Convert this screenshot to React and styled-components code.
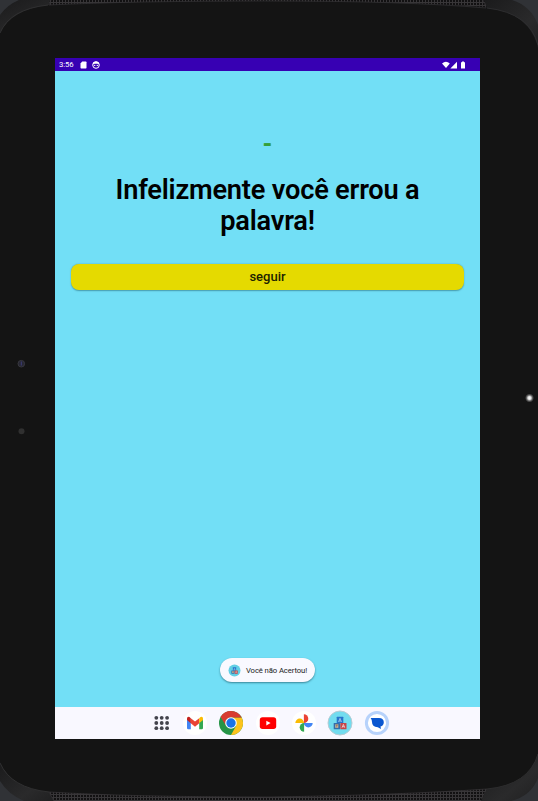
import React from "react";
import styled, { createGlobalStyle } from "styled-components";

const GlobalStyle = createGlobalStyle`
  * { box-sizing: border-box; }
  body { margin: 0; background: #141414; font-family: Roboto, sans-serif; }
`;

const Tablet = styled.main`
  position: relative;
  width: 538px;
  height: 801px;
  padding: 58px 58px 62px 55px;
  background: #141414;
  overflow: hidden;
`;

const Shell = styled.svg`
  position: absolute;
  inset: 0;
`;

const Screen = styled.section`
  position: relative;
  display: flex;
  flex-direction: column;
  width: 425px;
  height: 681px;
  background: #72dff6;
`;

const StatusBar = styled.header`
  display: flex;
  align-items: center;
  justify-content: space-between;
  height: 13px;
  padding: 0 13px 0 4px;
  background: #3700b3;
  color: #fff;
`;

const StatusGroup = styled.div`
  display: flex;
  align-items: center;
  gap: ${(p) => p.$gap}px;
`;

const Clock = styled.time`
  width: 15px;
  font-size: 7.7px;
  letter-spacing: -0.1px;
  line-height: 13px;
`;

const Content = styled.div`
  flex: 1;
  display: flex;
  flex-direction: column;
  align-items: center;
  padding: 60px 16px 25px;
`;

const Word = styled.p`
  margin: 0;
  height: 44px;
  color: #35a03a;
  font-size: 25px;
  font-weight: 700;
  line-height: 27px;
`;

const Message = styled.h1`
  margin: 0;
  width: 330px;
  color: #000;
  text-align: center;
  font-size: 27.2px;
  font-weight: 600;
  letter-spacing: -0.2px;
  line-height: 31px;
`;

const NextButton = styled.button`
  width: 393px;
  height: 26px;
  margin: 27px 0 0;
  padding: 0;
  border: 0;
  border-radius: 8px;
  background: #e5da00;
  color: #211f00;
  box-shadow: 0 0.5px 1.5px rgba(0, 50, 60, 0.4);
  font: 500 13px/24px Roboto, sans-serif;
`;

const Toast = styled.div`
  display: flex;
  align-items: center;
  gap: 5px;
  width: 95px;
  height: 24px;
  margin-top: auto;
  padding-left: 8px;
  border-radius: 12px;
  background: #f9f9ff;
  color: #1c1c22;
  box-shadow: 0 1px 2px rgba(0, 45, 60, 0.5);
  font-size: 7.7px;
  letter-spacing: -0.1px;
  white-space: nowrap;
`;

const Taskbar = styled.nav`
  display: grid;
  grid-template-columns: 32px repeat(6, 36.4px);
  align-items: center;
  justify-items: center;
  height: 32px;
  padding-left: 89.7px;
  background: #f9f8ff;
`;

const AppIcon = styled.svg`
  display: block;
  width: 26px;
  height: 26px;
`;

const DeviceShell = () => (
  <Shell width="538" height="801" viewBox="0 0 538 801" aria-hidden="true">
    <defs>
      <pattern id="mesh" width="3" height="3" patternUnits="userSpaceOnUse">
        <rect width="3" height="3" fill="#383638" />
        <rect x="0" y="0" width="2" height="2" fill="#121112" />
      </pattern>
      <linearGradient id="rim" x1="0" y1="0" x2="1" y2="1">
        <stop offset="0" stopColor="#1b1b1c" />
        <stop offset=".65" stopColor="#2a2a2b" />
        <stop offset="1" stopColor="#202021" />
      </linearGradient>
      <radialGradient id="led">
        <stop offset="0" stopColor="#fff" />
        <stop offset=".35" stopColor="#ddd" />
        <stop offset=".65" stopColor="#656565" />
        <stop offset="1" stopColor="#141414" />
      </radialGradient>
    </defs>
    <path d="M0 0H70L49 5Q12 9 0 33Z" fill="url(#rim)" />
    <path d="M0 0H19Q7 5 0 15Z" fill="#303236" />
    <path d="M0 33Q10 9 48 5" fill="none" stroke="#303031" />
    <path d="M50 0H486L487 7Q400 1 270 1Q130 1 49 5Z" fill="url(#mesh)" />
    <path d="M51 0L49 5Q130 1 270 1Q405 1 486 8L483 0" fill="none" stroke="#353436" strokeWidth=".7" />
    <path d="M484 0H538V48Q530 13 487 8Z" fill="url(#rim)" />
    <path d="M512 0H538V25Q531 6 512 0Z" fill="#303236" />
    <path d="M487 8Q530 13 538 45" fill="none" stroke="#2d2d2f" />
    <path d="M0 762Q10 788 49 792L54 801H0Z" fill="url(#rim)" />
    <path d="M0 781Q8 794 24 801H0Z" fill="#303236" />
    <path d="M0 763Q11 788 49 792" fill="none" stroke="#303031" />
    <path d="M49 792Q130 797 270 797Q400 795 487 789L481 801H54Z" fill="url(#mesh)" />
    <path d="M54 801L49 792Q130 797 270 797Q400 795 487 789L481 799" fill="none" stroke="#39373a" strokeWidth=".7" />
    <path d="M487 789Q529 785 538 754V801H481Z" fill="url(#rim)" />
    <path d="M538 778Q531 796 511 801H538Z" fill="#303236" />
    <path d="M487 789Q529 785 538 754" fill="none" stroke="#2c2c2d" />
    <circle cx="21.3" cy="363.7" r="3.3" fill="#272733" stroke="#38383f" />
    <path d="M21.3 361.5v4" stroke="#3c3c78" />
    <circle cx="21.5" cy="431.3" r="3" fill="#303030" />
    <circle cx="529.5" cy="398" r="4.5" fill="url(#led)" />
  </Shell>
);

const SdCardIcon = () => (
  <svg width="7" height="8" viewBox="0 0 7 8"><path d="M2.2 .5h3.6Q6.5 .5 6.5 1.2v5.6q0 .7-.7.7H1.2Q.5 7.5.5 6.8V2.5Z" fill="#fff" /></svg>
);

const FaceIcon = () => (
  <svg width="8" height="8" viewBox="0 0 8 8">
    <circle cx="4" cy="4" r="3.3" fill="none" stroke="#fff" />
    <path d="M.8 3.3Q1 .5 4 .5T7.2 3.3L5.3 2.8H2.7Z" fill="#fff" />
    <path d="M2 4.4h1.3M4.7 4.4H6" stroke="#fff" />
  </svg>
);

const ConnectionIcons = () => (
  <svg width="25" height="8" viewBox="0 0 25 8" fill="#fff">
    <path d="M0 2.4Q4 -1 7.8 2.4L4 7.1ZM8.4 7.5L15 .8V7.5ZM19 1.3h1V.4h2v.9h1v6.2h-4Z" />
  </svg>
);

const Blocks = () => (
  <>
    <rect x="9.7" y="6.7" width="6.6" height="6.3" rx=".5" fill="#2675cb" />
    <path d="M11.5 12l1.5-3.7 1.5 3.7M12 11h2" stroke="#b8d9ee" fill="none" strokeWidth=".7" />
    <rect x="6.7" y="13" width="6.3" height="6.3" rx=".5" fill="#356ca8" />
    <rect x="8.3" y="14.3" width="3" height="3.5" fill="#d8c49e" />
    <path d="M8.8 15h2M9.8 15v2.5" stroke="#784835" strokeWidth=".6" />
    <rect x="13.3" y="13" width="6.2" height="6.3" rx=".5" fill="#c84447" />
    <path d="M15 17.7l1.4-3.3 1.3 3.3M15.5 16.7h1.8" stroke="#eee" fill="none" strokeWidth=".7" />
  </>
);

const BlocksIcon = ({ small }) => (
  <svg width={small ? 13 : 26} height={small ? 13 : 26} viewBox="0 0 26 26">
    <circle cx="13" cy="13" r="12" fill={small ? "#61cfe5" : "#72dcef"} stroke={small ? "none" : "#b8ccd4"} />
    <Blocks />
  </svg>
);

const GridIcon = () => (
  <AppIcon viewBox="0 0 26 26" fill="#43434c">
    {[7.8, 13, 18.2].flatMap((y) => [8.3, 13.7, 19.1].map((x) => <circle key={`${x}-${y}`} cx={x} cy={y} r="1.9" />))}
  </AppIcon>
);

const MailIcon = () => (
  <AppIcon viewBox="0 0 26 26">
    <circle cx="13" cy="13" r="12" fill="#fff" />
    <path d="M5 9.5l3.8 2.7v7H6.2Q5 19.2 5 18Z" fill="#4285f4" />
    <path d="M21 9.5l-3.8 2.7v7h2.6q1.2 0 1.2-1.2Z" fill="#34a853" />
    <path d="M8.8 8.2L13 11.6l4.2-3.4v5L13 16.8l-4.2-3.6Z" fill="#ea4335" />
    <path d="M5 8.4Q5 6.8 6.5 6.8q.8 0 2.3 1.4v5L5 10Z" fill="#c5221f" />
    <path d="M17.2 8.2Q18.7 6.8 19.6 6.8 21 6.8 21 8.5V10l-3.8 3.2Z" fill="#fbbc04" />
  </AppIcon>
);

const ChromeIcon = () => (
  <AppIcon viewBox="0 0 26 26">
    <circle cx="13" cy="13" r="12" fill="#269447" />
    <path d="M13 7.5H23.7A12 12 0 0 1 13 25L18 16Z" fill="#fcc31c" />
    <path d="M2.6 7A12 12 0 0 1 23.6 7.5H13A5.5 5.5 0 0 0 8.2 16Z" fill="#d83b30" />
    <circle cx="13" cy="13" r="5.8" fill="#fff" /><circle cx="13" cy="13" r="4.7" fill="#1a73e8" />
  </AppIcon>
);

const VideoIcon = () => (
  <AppIcon viewBox="0 0 26 26">
    <circle cx="13" cy="13" r="12" fill="#fff" />
    <rect x="4.8" y="7.3" width="16.4" height="11.6" rx="2.7" fill="#f00" />
    <path d="M11.3 10.7v4.8l4.3-2.4Z" fill="#fff" />
  </AppIcon>
);

const PhotosIcon = () => (
  <AppIcon viewBox="0 0 26 26">
    <circle cx="13" cy="13" r="12" fill="#fff" />
    <path d="M12.9 4.3a4.4 4.4 0 0 1 0 8.8Z" fill="#ea4335" />
    <path d="M21.7 13A4.4 4.4 0 0 1 12.9 13Z" fill="#4285f4" />
    <path d="M13.1 21.7A4.4 4.4 0 0 1 13.1 12.9Z" fill="#34a853" />
    <path d="M4.3 13A4.4 4.4 0 0 1 13.1 13Z" fill="#fbbc04" />
  </AppIcon>
);

const MessagesIcon = () => (
  <AppIcon viewBox="0 0 26 26">
    <circle cx="13" cy="13" r="10.6" fill="#fff" stroke="#b7d2fb" strokeWidth="3" />
    <path d="M6.7 8H15Q19.8 8.3 19.8 12.2Q19.8 15.6 16.5 16.6L17 19L13.8 17.2Q8 17 8 12Q8 9.8 6.7 8Z" fill="#0b57d0" />
  </AppIcon>
);

export default function App() {
  return (
    <>
      <GlobalStyle />
      <Tablet>
        <DeviceShell />
        <Screen>
          <StatusBar>
            <StatusGroup $gap={5.5}><Clock>3:56</Clock><SdCardIcon /><FaceIcon /></StatusGroup>
            <StatusGroup $gap={0}><ConnectionIcons /></StatusGroup>
          </StatusBar>
          <Content>
            <Word>-</Word>
            <Message>Infelizmente você errou a palavra!</Message>
            <NextButton>seguir</NextButton>
            <Toast role="status"><BlocksIcon small />Você não Acertou!</Toast>
          </Content>
          <Taskbar>
            <GridIcon /><MailIcon /><ChromeIcon /><VideoIcon /><PhotosIcon /><BlocksIcon /><MessagesIcon />
          </Taskbar>
        </Screen>
      </Tablet>
    </>
  );
}
